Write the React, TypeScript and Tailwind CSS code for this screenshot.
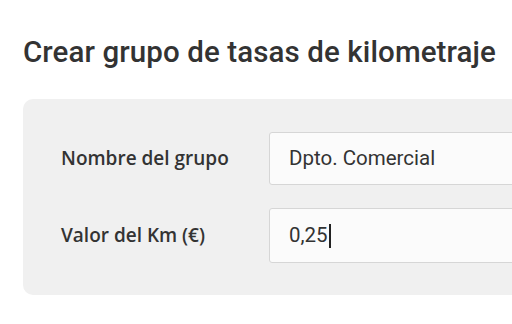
export default function App() {
  return (
    <main className="h-[324px] w-[512px] overflow-hidden bg-white">
      <div className="pl-[23px] pt-[30px]">
        <h1 className="font-['Roboto',sans-serif] text-[29.5px] leading-[44px] font-medium tracking-[0.1px] text-[#333] whitespace-nowrap">
          Crear grupo de tasas de kilometraje
        </h1>

        <section className="mt-[25px] w-[520px] h-[196px] rounded-l-[10px] bg-[#f0f0f0] pl-[38px] pt-[33px] flex flex-col gap-[23px]">
          <div className="flex items-center">
            <label className="w-[208px] font-['Open_Sans',sans-serif] text-[19px] font-semibold text-[#333]">
              Nombre del grupo
            </label>
            <div className="flex-1 h-[53px] rounded-[3px] border border-[#d6d6d6] bg-[#fbfbfb] pl-[19px] flex items-center">
              <span className="font-['Roboto',sans-serif] text-[20.5px] text-[#333]">Dpto. Comercial</span>
            </div>
          </div>
          <div className="flex items-center">
            <label className="w-[208px] font-['Open_Sans',sans-serif] text-[19px] font-semibold text-[#333]">
              Valor del Km (€)
            </label>
            <div className="flex-1 h-[55px] rounded-[3px] border border-[#d6d6d6] bg-[#fbfbfb] pl-[19px] flex items-center">
              <span className="font-['Roboto',sans-serif] text-[20.5px] text-[#333]">0,25</span>
              <span className="ml-px h-[24px] w-[2px] bg-[#222]" />
            </div>
          </div>
        </section>
      </div>
    </main>
  );
}
